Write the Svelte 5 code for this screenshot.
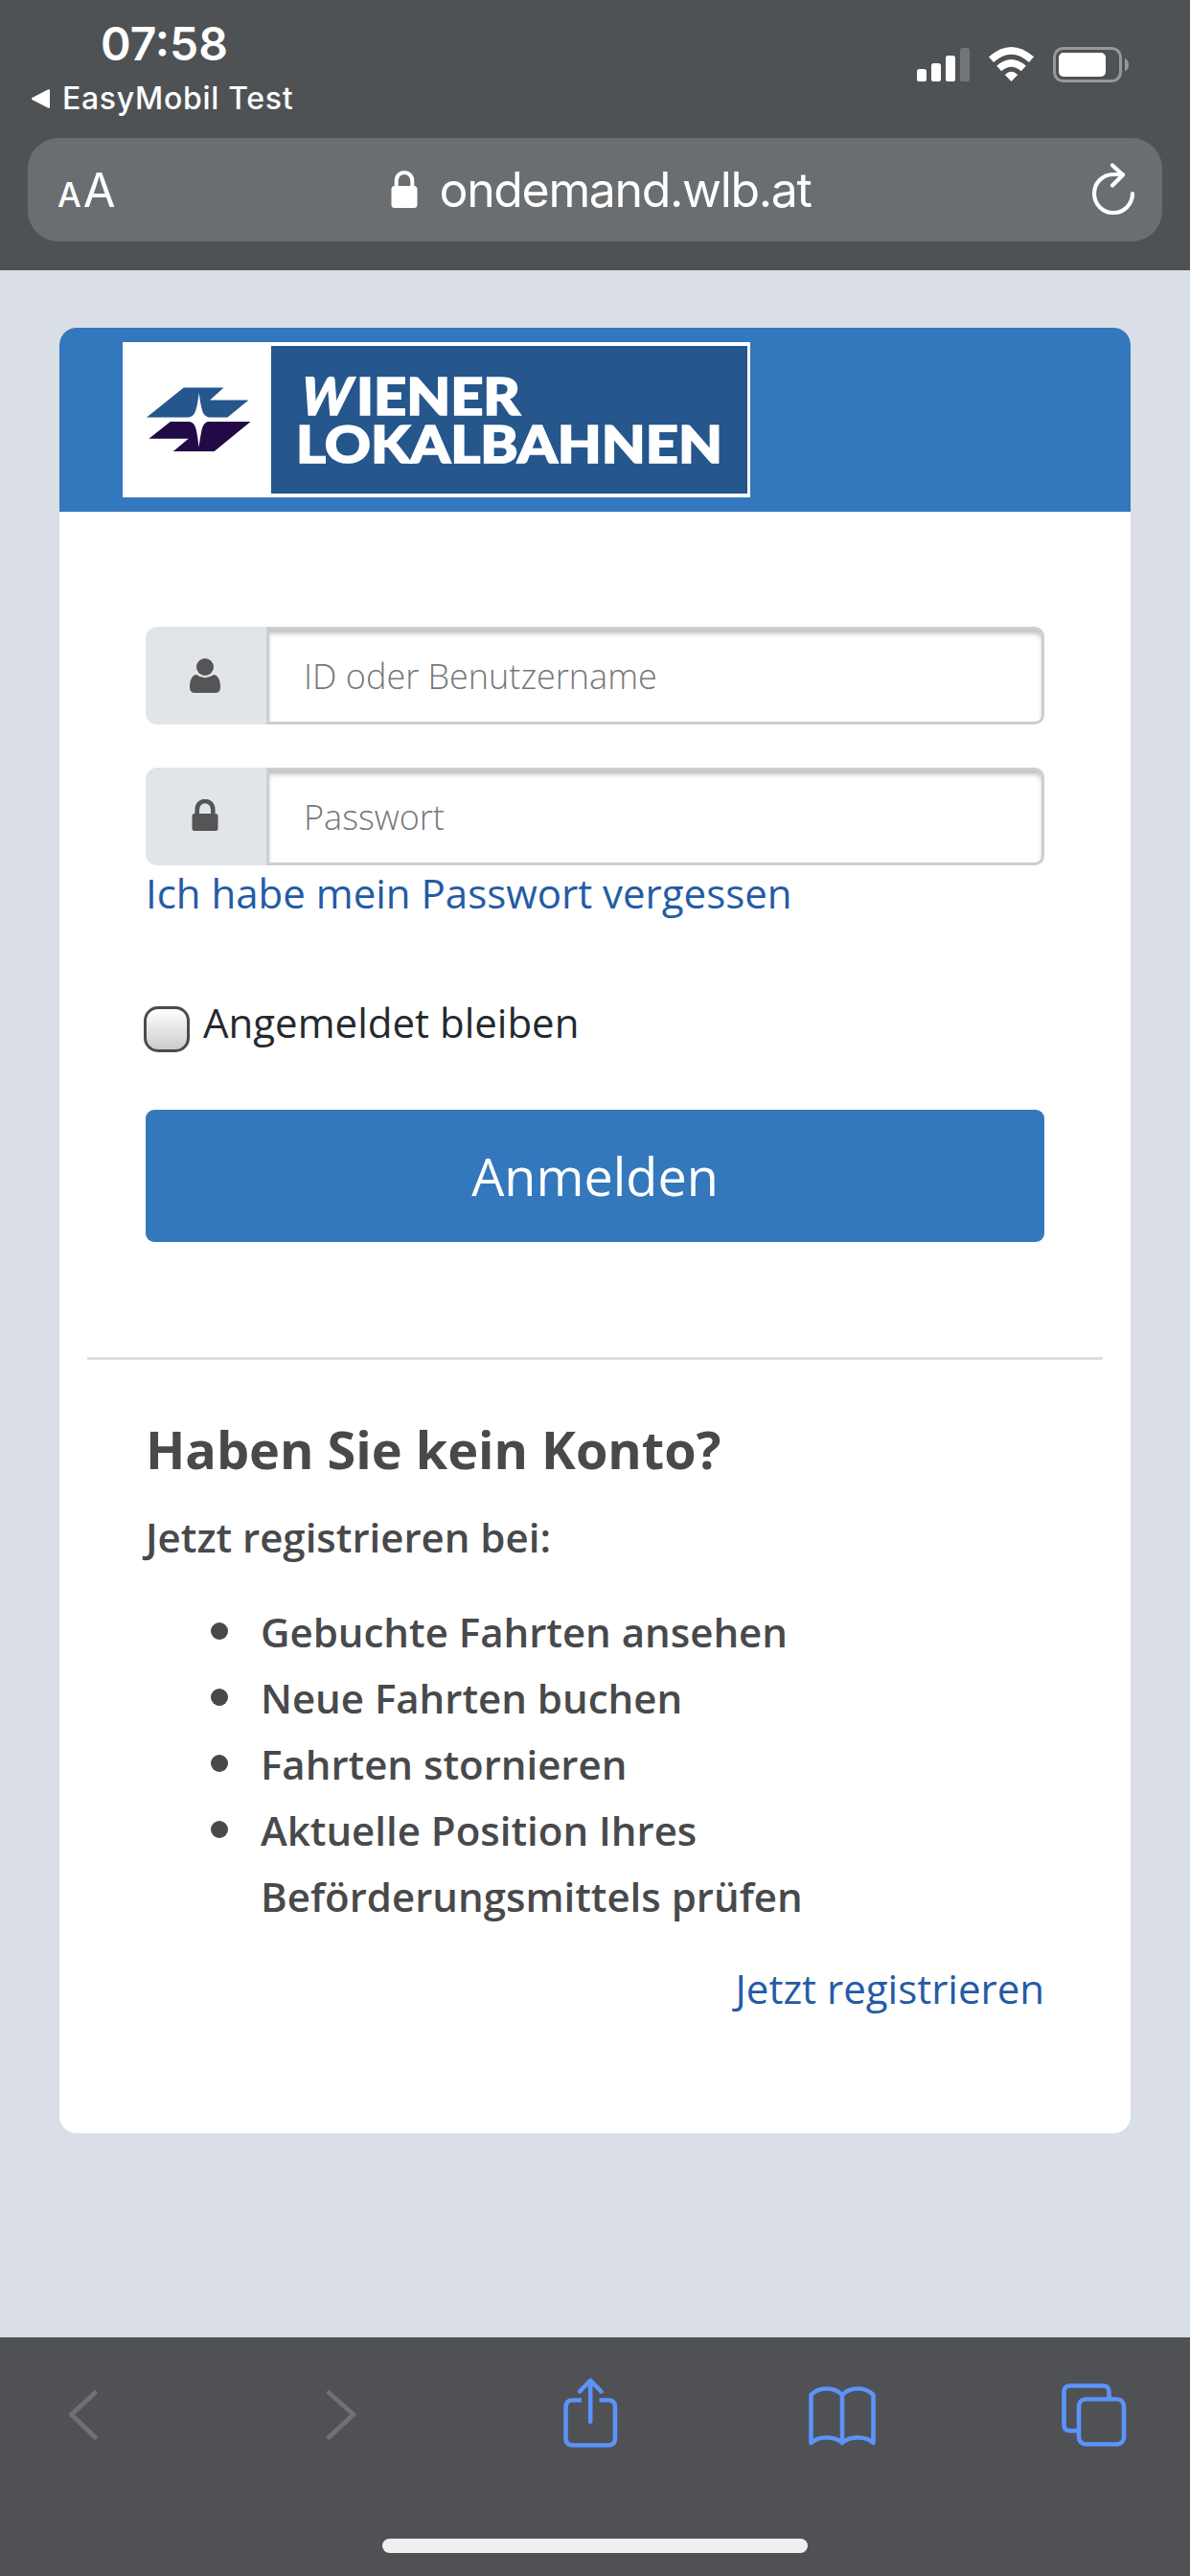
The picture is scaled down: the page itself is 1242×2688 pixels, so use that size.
<script>
  const benefits = [
    'Gebuchte Fahrten ansehen',
    'Neue Fahrten buchen',
    'Fahrten stornieren',
    'Aktuelle Position Ihres Beförderungsmittels prüfen',
  ];
  let username = $state('');
  let password = $state('');
  let remember = $state(false);
</script>

<div class="screen">
  <header class="browser-top">
    <div class="status">
      <div class="status-left">
        <span class="time">07:58</span>
        <span class="back-app">
          <svg width="21" height="22" viewBox="0 0 21 22"><path d="M2 9.8 L18 1.4 Q20 .6 20 2.5 V19.5 Q20 21.4 18 20.6 L2 12.2 Q0 11 2 9.8Z" fill="#fff" /></svg>
          <span class="app-name">EasyMobil Test</span>
        </span>
      </div>
      <svg class="status-icons" width="222" height="38" viewBox="957 48 222 38">
        <g fill="#fff">
          <rect x="957" y="72" width="10" height="13" rx="2.6" />
          <rect x="972" y="66" width="10" height="19" rx="2.6" />
          <rect x="987" y="58" width="10" height="27" rx="2.6" />
          <rect x="1002" y="50" width="10" height="35" rx="2.6" fill="#737678" />
          <path d="M1055.500 85 L1048.800 78 Q1055.500 71.500 1062.200 78Z" />
        </g>
        <g fill="none" stroke="#fff" stroke-width="7.6">
          <path d="M1042.700 71.500 Q1055.500 60.300 1068.300 71.500" />
          <path d="M1034.500 62.200 Q1055.500 43.500 1076.500 62.200" />
        </g>
        <rect x="1100.500" y="50.500" width="69" height="34" rx="9" fill="none" stroke="#96989a" stroke-width="3" />
        <rect x="1105" y="55" width="49" height="25" rx="5" fill="#fff" />
        <path d="M1174 60.500 Q1178 63 1178 67.500 Q1178 72 1174 74.500Z" fill="#96989a" />
      </svg>
    </div>
    <div class="address">
      <span class="text-size"><span class="small-a">A</span><span class="big-a">A</span></span>
      <span class="host">
        <svg width="28" height="40" viewBox="0 0 28 40">
          <rect x=".5" y="16" width="27" height="23" rx="3.500" fill="#fff" />
          <path d="M5.700 18 V11 C5.700 -1 22.300 -1 22.300 11 V18" fill="none" stroke="#fff" stroke-width="4" />
        </svg>
        <span class="domain">ondemand.wlb.at</span>
      </span>
      <svg class="reload" width="48" height="58" viewBox="1138 170 48 58" fill="none" stroke="#fff" stroke-width="4.200" stroke-linecap="round" stroke-linejoin="round">
        <path d="M1182 203 A20 20 0 1 1 1162 183 H1172 M1161 173.500 L1172 183.500 L1161 194.500" />
      </svg>
    </div>
  </header>

  <main>
    <section class="card">
      <div class="brand">
        <svg width="655" height="162" viewBox="128 357 655 162">
          <rect x="128" y="357" width="655" height="162" fill="#fff" />
          <rect x="283" y="361" width="497" height="154" fill="#25568c" />
          <path d="M153 435.500 L191.700 404.500 H233.500 L219 417.500 H259.500 L237.500 435.500 H220 C212 435.500 210.500 430 207.700 410 C205 430 203.500 435.500 195 435.500Z" fill="#25568c" />
          <path d="M177.800 440 H196 C204.500 440 205 447 207.700 466.500 C210.500 447 211 440 219 440 H261.500 L223.600 471 H180.800 L196.700 457.800 H155.400Z" fill="#220a47" />
          <g class="brand-text">
            <text transform="translate(311 433) skewX(-12)" textLength="52" lengthAdjust="spacingAndGlyphs">W</text>
            <text x="372" y="433" textLength="171" lengthAdjust="spacingAndGlyphs">IENER</text>
            <text x="309" y="482.500" textLength="445" lengthAdjust="spacingAndGlyphs">LOKALBAHNEN</text>
          </g>
        </svg>
      </div>

      <form class="login" onsubmit={(e) => e.preventDefault()}>
        <label class="field">
          <span class="addon">
            <svg width="34" height="36" viewBox="0 0 34 36" fill="#555">
              <ellipse cx="17" cy="9" rx="9" ry="9" />
              <path d="M8 17 Q17 23.500 26 17 C31.500 18 33 24 33 30 Q33 36 27.500 36 H6.500 Q1 36 1 30 C1 24 2.500 18 8 17Z" />
            </svg>
          </span>
          <input type="text" placeholder="ID oder Benutzername" bind:value={username} />
        </label>
        <label class="field">
          <span class="addon lock">
            <svg width="28" height="34" viewBox="0 0 28 34">
              <rect x=".5" y="15" width="27" height="18" rx="2.500" fill="#555" />
              <path d="M5.700 17 V11 C5.700 -1 22.300 -1 22.300 11 V17" fill="none" stroke="#555" stroke-width="4.600" />
            </svg>
          </span>
          <input type="password" placeholder="Passwort" bind:value={password} />
        </label>
        <a class="forgot" href="#forgot">Ich habe mein Passwort vergessen</a>
        <label class="remember">
          <input type="checkbox" bind:checked={remember} />
          <span>Angemeldet bleiben</span>
        </label>
        <button type="submit">Anmelden</button>
      </form>

      <hr />

      <div class="signup">
        <h2>Haben Sie kein Konto?</h2>
        <p>Jetzt registrieren bei:</p>
        <ul>
          {#each benefits as benefit}
            <li><span>{benefit}</span></li>
          {/each}
        </ul>
        <a class="register" href="#register">Jetzt registrieren</a>
      </div>
    </section>
  </main>

  <footer>
    <nav>
      <svg width="36" height="76" viewBox="70 2480 36 76" class="dim"><path d="M99 2497 L74.500 2519.500 L99 2543" /></svg>
      <svg width="36" height="76" viewBox="340 2480 36 76" class="dim"><path d="M343.500 2497 L369 2519.500 L343.500 2543" /></svg>
      <svg width="60" height="76" viewBox="586 2480 60 76">
        <path stroke-linecap="butt" d="M607 2504.500 H598 Q590.500 2504.500 590.500 2512 V2544.500 Q590.500 2551.500 598 2551.500 H634.500 Q642 2551.500 642 2544.500 V2512 Q642 2504.500 634.500 2504.500 H625.500" />
        <path d="M616.200 2485 V2527 M605 2495.500 L616.200 2484 L627.500 2495.500" />
      </svg>
      <svg width="74" height="76" viewBox="842 2480 74 76">
        <path d="M846.500 2499 Q853 2492.500 862.500 2492.500 Q873 2492.500 879 2499 Q885 2492.500 895.500 2492.500 Q905 2492.500 911.500 2499 V2549 Q905 2543.500 895.500 2543.500 Q885 2543.500 879 2549 Q873 2543.500 862.500 2543.500 Q853 2543.500 846.500 2549Z M879 2499 V2549" />
      </svg>
      <svg width="72" height="76" viewBox="1106 2480 72 76">
        <rect x="1126" y="2503.500" width="47" height="47" rx="7" />
        <path stroke-linecap="butt" d="M1157.500 2502 V2496 Q1157.500 2489.500 1151 2489.500 H1117 Q1110.500 2489.500 1110.500 2496 V2530 Q1110.500 2536.500 1117 2536.500 H1125" />
      </svg>
    </nav>
    <div class="home-indicator"></div>
  </footer>
</div>

<style>
  :global(body) { margin: 0; }
  .screen, .screen * { box-sizing: border-box; }
  .screen {
    width: 1242px;
    height: 2688px;
    display: flex;
    flex-direction: column;
    background: #dadee6;
    font-family: "Open Sans", "Noto Sans", sans-serif;
    overflow: hidden;
  }
  svg { display: block; flex: none; }

  .browser-top {
    height: 282px;
    flex: none;
    padding: 0 29px;
    background: #4e5255;
    color: #fff;
    font-family: Inter, "Liberation Sans", sans-serif;
  }
  .status {
    height: 144px;
    display: flex;
    justify-content: space-between;
    padding: 16px 34px 0 3px;
  }
  .status-left { display: flex; flex-direction: column; }
  .time {
    margin-left: 73px;
    font-size: 48px;
    line-height: 60px;
    font-weight: 600;
  }
  .back-app {
    display: flex;
    align-items: center;
    gap: 12px;
    height: 53px;
  }
  .app-name { font-size: 32px; font-weight: 500; letter-spacing: 0.7px; white-space: nowrap; }
  .status-icons { margin-top: 32px; }
  .address {
    height: 108px;
    padding: 0 27px 0 31px;
    display: flex;
    align-items: center;
    justify-content: space-between;
    border-radius: 32px;
    background: #6a6e71;
  }
  .text-size { width: 62px; display: flex; align-items: baseline; gap: 2px; line-height: 108px; padding-top: 6px; }
  .small-a { font-size: 35px; font-weight: 500; }
  .big-a { font-size: 49px; }
  .host { display: flex; align-items: center; gap: 23px; margin-left: -6px; }
  .domain { font-size: 50px; line-height: 60px; letter-spacing: -1.35px; white-space: nowrap; }

  main { flex: 1; padding: 60px 62px 0; }
  .card {
    width: 1118px;
    height: 1884px;
    background: #fff;
    border-radius: 18px;
    overflow: hidden;
  }
  .brand { height: 192px; padding: 15px 66px; background: #3378bd; }
  .brand-text {
    font-family: Lato, sans-serif;
    font-weight: 900;
    font-size: 54px;
    fill: #fff;
    stroke: #fff;
    stroke-width: 1.6;
  }

  .login {
    display: flex;
    flex-direction: column;
    padding: 120px 90px 0;
  }
  .field { display: flex; height: 102px; margin-bottom: 45px; }
  .field + .field { margin-bottom: 0; }
  .addon {
    width: 126px;
    flex: none;
    display: flex;
    align-items: center;
    justify-content: center;
    padding-right: 2px;
    background: #e1e5ea;
    border-radius: 12px 0 0 12px;
  }
  .addon.lock { padding-bottom: 2px; }
  .field input {
    flex: 1;
    min-width: 0;
    margin: 0;
    padding: 0 36px;
    border: 3px solid #cbced2;
    border-radius: 0 10px 10px 0;
    background: #fff;
    box-shadow: inset 0 5px 5px -1px rgba(0, 0, 0, 0.26);
    font: 300 36px "Open Sans", sans-serif;
    color: #555;
    outline: none;
  }
  .field input::placeholder { color: #777; opacity: 1; }
  a { color: #245ba6; text-decoration: none; font-size: 42px; }
  .forgot { line-height: 58px; align-self: flex-start; white-space: nowrap; }
  .remember {
    height: 60px;
    margin-top: 77px;
    display: flex;
    align-items: center;
    gap: 14px;
    margin-left: -2px;
    font-size: 42px;
    line-height: 60px;
    color: #24292e;
  }
  .remember span { margin-top: -2px; white-space: nowrap; }
  .remember input {
    appearance: none;
    width: 48px;
    height: 48px;
    margin: 12px 0 0;
    align-self: flex-start;
    border: 3px solid #4b4b4b;
    border-radius: 15px;
    background: linear-gradient(#fff, #ccc);
  }
  button {
    height: 138px;
    margin-top: 60px;
    padding: 0;
    border: 0;
    border-radius: 9px;
    background: #3378bd;
    color: #fff;
    font: 400 54px "Open Sans", sans-serif;
  }
  hr {
    height: 3px;
    margin: 120px 29px 0;
    border: 0;
    background: #dadee4;
  }
  .signup {
    display: flex;
    flex-direction: column;
    padding: 55px 90px 0;
    color: #48494b;
    font-weight: 600;
  }
  h2 { margin: 0; font-size: 54px; line-height: 76px; font-weight: 700; white-space: nowrap; }
  p { margin: 19px 0 0; font-size: 42px; line-height: 69px; }
  ul { margin: 30px 0 0; padding: 0; list-style: none; }
  li {
    display: flex;
    width: 760px;
    padding-left: 68px;
    gap: 34px;
    font-size: 42px;
    line-height: 69px;
  }
  li::before {
    content: '';
    width: 18px;
    height: 18px;
    flex: none;
    margin-top: 25px;
    border-radius: 50%;
    background: #48494b;
  }
  .register { align-self: flex-end; margin-top: 27px; line-height: 69px; font-weight: 400; }

  footer {
    height: 249px;
    flex: none;
    background: #4f5154;
    display: flex;
    flex-direction: column;
    align-items: center;
  }
  nav {
    width: 1108px;
    height: 210px;
    padding-top: 41px;
    margin-left: 6px;
    display: grid;
    grid-template-columns: 270px 246px 256px 264px 72px;
  }
  nav svg {
    fill: none;
    stroke: #5b93fa;
    stroke-width: 4.6;
    stroke-linecap: round;
    stroke-linejoin: round;
  }
  nav .dim { stroke: #707173; stroke-width: 5; }
  .home-indicator { width: 444px; height: 15px; border-radius: 8px; background: #efefef; }
</style>
